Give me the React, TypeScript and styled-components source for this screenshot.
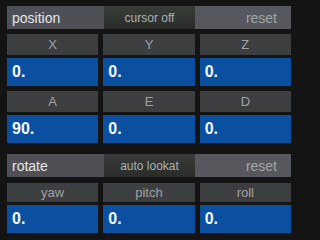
import React from "react";
import styled, { createGlobalStyle } from "styled-components";

const Global = createGlobalStyle`
  html, body { margin: 0; padding: 0; background: #141414; }
  body { font-family: "Liberation Sans", Arial, sans-serif; }
`;

const Panel = styled.div`
  width: 284px;
  padding: 6px 9px 0 7px;
  display: flex;
  flex-direction: column;
`;

const Section = styled.div<{ $top?: number }>`
  display: flex;
  flex-direction: column;
  margin-top: ${(p) => p.$top ?? 0}px;
`;

const Header = styled.div<{ $gap: number }>`
  display: grid;
  grid-template-columns: 97px 91px 1fr;
  height: 23px;
  margin-bottom: ${(p) => p.$gap}px;
`;

const Title = styled.div`
  background: #4e5056;
  color: #e6e6e6;
  font-size: 14px;
  display: flex;
  align-items: center;
  padding-left: 5px;
`;

const Toggle = styled.div`
  background: linear-gradient(180deg, #3a3c3a 0%, #2a2c2a 100%);
  color: #a9b1b1;
  font-size: 12px;
  display: flex;
  align-items: center;
  justify-content: center;
`;

const Reset = styled.div`
  background: #56585d;
  color: #a2a5a8;
  font-size: 14px;
  display: flex;
  align-items: center;
  justify-content: flex-end;
  padding-right: 14px;
`;

const Grid = styled.div`
  display: grid;
  grid-template-columns: repeat(3, 1fr);
  column-gap: 5px;
  row-gap: 5px;
`;

const Cell = styled.div`
  display: flex;
  flex-direction: column;
  gap: 3px;
`;

const Label = styled.div<{ $h: number }>`
  height: ${(p) => p.$h}px;
  background: #3c3e40;
  color: #a0a2a4;
  font-size: 13px;
  display: flex;
  align-items: center;
  justify-content: center;
`;

const Value = styled.div`
  height: 28px;
  background: #0b50a0;
  color: #f4f6fa;
  font-size: 16px;
  font-weight: bold;
  display: flex;
  align-items: center;
  padding-left: 5px;
`;

type Field = { label: string; value: string };

const Fields = ({ items, h }: { items: Field[]; h: number }) => (
  <Grid>
    {items.map((f) => (
      <Cell key={f.label}>
        <Label $h={h}>{f.label}</Label>
        <Value>{f.value}</Value>
      </Cell>
    ))}
  </Grid>
);

export default function App() {
  return (
    <>
      <Global />
      <Panel>
        <Section>
          <Header $gap={5}>
            <Title>position</Title>
            <Toggle>cursor off</Toggle>
            <Reset>reset</Reset>
          </Header>
          <Fields
            h={21}
            items={[
              { label: "X", value: "0." },
              { label: "Y", value: "0." },
              { label: "Z", value: "0." },
              { label: "A", value: "90." },
              { label: "E", value: "0." },
              { label: "D", value: "0." },
            ]}
          />
        </Section>
        <Section $top={11}>
          <Header $gap={6}>
            <Title>rotate</Title>
            <Toggle>auto lookat</Toggle>
            <Reset>reset</Reset>
          </Header>
          <Fields
            h={19}
            items={[
              { label: "yaw", value: "0." },
              { label: "pitch", value: "0." },
              { label: "roll", value: "0." },
            ]}
          />
        </Section>
      </Panel>
    </>
  );
}
